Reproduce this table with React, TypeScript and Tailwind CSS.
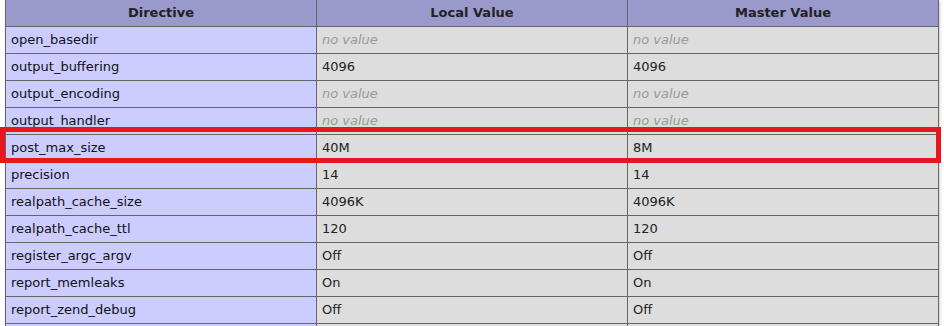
import React from 'react';

type Row = { name: string; local: string | null; master: string | null };

const rows: Row[] = [
  { name: 'open_basedir', local: null, master: null },
  { name: 'output_buffering', local: '4096', master: '4096' },
  { name: 'output_encoding', local: null, master: null },
  { name: 'output_handler', local: null, master: null },
  { name: 'post_max_size', local: '40M', master: '8M' },
  { name: 'precision', local: '14', master: '14' },
  { name: 'realpath_cache_size', local: '4096K', master: '4096K' },
  { name: 'realpath_cache_ttl', local: '120', master: '120' },
  { name: 'register_argc_argv', local: 'Off', master: 'Off' },
  { name: 'report_memleaks', local: 'On', master: 'On' },
  { name: 'report_zend_debug', local: 'Off', master: 'Off' },
];

const Value: React.FC<{ v: string | null }> = ({ v }) =>
  v === null ? <i className="text-[#999]">no value</i> : <>{v}</>;

const App: React.FC = () => {
  return (
    <div className="relative h-[326px] overflow-hidden bg-white text-[#222] font-['DejaVu_Sans',sans-serif]">
      <table className="ml-[5px] -mt-px w-[934px] table-fixed border-collapse shadow-[1px_2px_3px_#ccc]">
        <colgroup>
          <col className="w-[311px]" />
          <col className="w-[311px]" />
          <col />
        </colgroup>
        <thead>
          <tr className="bg-[#99c]">
            <th className="border border-[#666] px-[5px] py-[4px] text-[13px] leading-[18px] font-bold">Directive</th>
            <th className="border border-[#666] px-[5px] py-[4px] text-[13px] leading-[18px] font-bold">Local Value</th>
            <th className="border border-[#666] px-[5px] py-[4px] text-[13px] leading-[18px] font-bold">Master Value</th>
          </tr>
        </thead>
        <tbody>
          {rows.map((r) => (
            <tr key={r.name}>
              <td className="border border-[#666] bg-[#ccf] px-[5px] py-[4px] text-left text-[13px] leading-[18px] text-[#111]">{r.name}</td>
              <td className="border border-[#666] bg-[#ddd] px-[5px] py-[4px] text-left text-[13px] leading-[18px]"><Value v={r.local} /></td>
              <td className="border border-[#666] bg-[#ddd] px-[5px] py-[4px] text-left text-[13px] leading-[18px]"><Value v={r.master} /></td>
            </tr>
          ))}
          {/* next row, only its top edge shows */}
          <tr>
            <td className="border border-[#666] bg-[#ccf] px-[5px] py-[4px] text-[13px] leading-[18px]">&nbsp;</td>
            <td className="border border-[#666] bg-[#ddd] px-[5px] py-[4px] text-[13px] leading-[18px]">&nbsp;</td>
            <td className="border border-[#666] bg-[#ddd] px-[5px] py-[4px] text-[13px] leading-[18px]">&nbsp;</td>
          </tr>
        </tbody>
      </table>
      {/* highlight box over post_max_size row */}
      <div className="absolute left-0 top-[127px] h-[36px] w-[941px] border-[5px] border-[#e8171f]" />
    </div>
  );
};

export default App;
